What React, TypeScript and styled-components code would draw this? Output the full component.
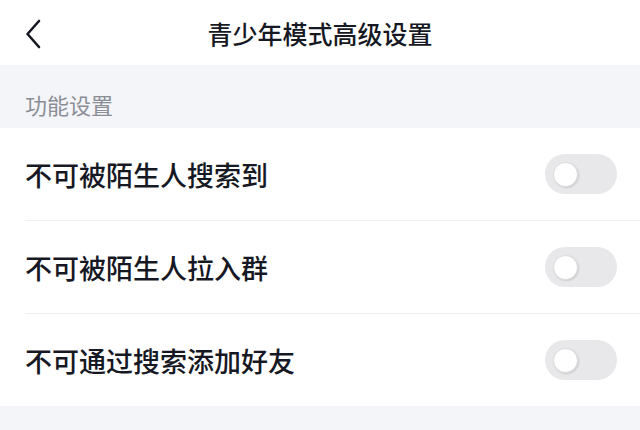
import styled, { createGlobalStyle } from "styled-components";

const GlobalStyle = createGlobalStyle`
  html, body {
    margin: 0;
    padding: 0;
    background: #f3f5f8;
  }
  body {
    font-family: "Noto Sans CJK SC", "Noto Sans", sans-serif;
    -webkit-font-smoothing: antialiased;
  }
`;

const items = ["不可被陌生人搜索到", "不可被陌生人拉入群", "不可通过搜索添加好友"];

const Toggle = () => (
  <SToggle>
    <SKnob />
  </SToggle>
);

const App = () => {
  return (
    <SPage>
      <GlobalStyle />
      <SHeader>
        <SBack>
          <svg width="16" height="30" viewBox="0 0 16 30" fill="none">
            <path d="M14 2 L2.5 15 L14 28" stroke="#161823" strokeWidth="2.6" strokeLinecap="round" strokeLinejoin="round" />
          </svg>
        </SBack>
        <STitle>青少年模式高级设置</STitle>
        <div />
      </SHeader>
      <SSection>
        <SSectionLabel>功能设置</SSectionLabel>
      </SSection>
      <SList>
        {items.map((text, i) => (
          <SRow key={text}>
            <SRowInner $first={i === 0}>
              <SRowText>{text}</SRowText>
              <Toggle />
            </SRowInner>
          </SRow>
        ))}
      </SList>
    </SPage>
  );
};

export default App;

const SPage = styled.div`
  width: 640px;
  height: 430px;
  background: #f3f5f8;
  overflow: hidden;
`;

const SHeader = styled.div`
  display: grid;
  grid-template-columns: 1fr auto 1fr;
  align-items: center;
  height: 65px;
  background: #ffffff;
`;

const SBack = styled.div`
  display: flex;
  align-items: center;
  padding-left: 25px;
  padding-top: 2px;
`;

const STitle = styled.div`
  font-size: 25px;
  line-height: 25px;
  font-weight: 500;
  color: #161823;
  padding-top: 2px;
`;

const SSection = styled.div`
  display: flex;
  align-items: flex-end;
  height: 63px;
  box-sizing: border-box;
  padding: 0 25px 13px;
`;

const SSectionLabel = styled.div`
  font-size: 22px;
  line-height: 22px;
  color: #8b8e96;
`;

const SList = styled.div`
  background: #ffffff;
`;

const SRow = styled.div`
  padding-left: 25px;
`;

const SRowInner = styled.div<{ $first: boolean }>`
  display: flex;
  align-items: center;
  justify-content: space-between;
  height: 92px;
  padding-right: 23px;
  border-top: ${(p) => (p.$first ? "none" : "1px solid #f0f0f2")};
`;

const SRowText = styled.div`
  font-size: 27px;
  line-height: 27px;
  font-weight: 500;
  color: #161823;
`;

const SToggle = styled.div`
  display: flex;
  align-items: center;
  width: 72px;
  height: 40px;
  box-sizing: border-box;
  padding-left: 8px;
  border-radius: 20px;
  background: #e8e8ea;
`;

const SKnob = styled.div`
  width: 25px;
  height: 25px;
  box-sizing: border-box;
  border-radius: 50%;
  background: #ffffff;
  border: 1px solid #dcdcde;
  box-shadow: 1px 1px 2px rgba(0, 0, 0, 0.12);
`;
